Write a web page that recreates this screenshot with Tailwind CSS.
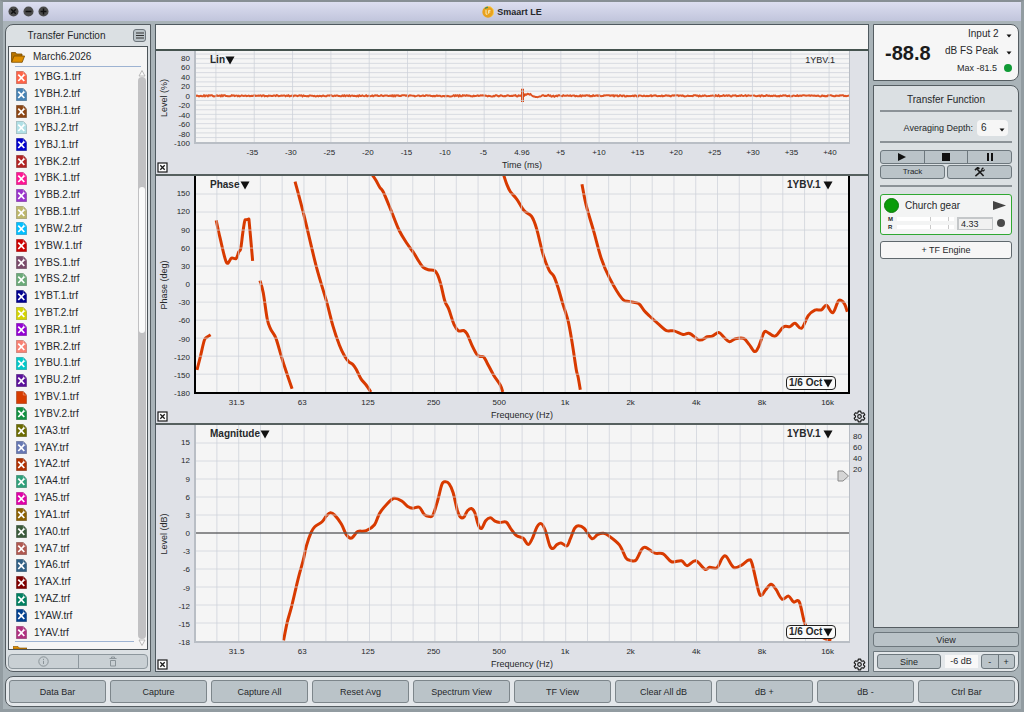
<!DOCTYPE html>
<html lang="en">
<head>
<meta charset="utf-8">
<meta name="viewport" content="width=device-width, initial-scale=1">
<title>Smaart LE</title>
<script src="https://cdn.jsdelivr.net/npm/@tailwindcss/browser@4"></script>
</head>
<body class="h-screen overflow-hidden bg-[#a9b3b8] font-['Liberation_Sans',Arial,sans-serif] text-[10px] leading-3 text-[#26282a]">
<svg class="hidden" aria-hidden="true">
  <symbol id="caret" viewBox="0 0 10 9"><path d="M0.5 0.5h9L5 8.5z" fill="#111"/></symbol>
  <symbol id="small-caret" viewBox="0 0 6 4"><path d="M0.5 0.5h5L3 3.5z" fill="#111"/></symbol>
  <symbol id="close-box" viewBox="0 0 11 11"><rect x="1" y="1" width="9" height="9" fill="#fff" stroke="#1a1a1a" stroke-width="1.2"/><path d="M3.3 3.3l4.4 4.4M7.7 3.3L3.3 7.7" stroke="#1a1a1a" stroke-width="1.3"/></symbol>
  <symbol id="gear" viewBox="0 0 24 24"><path d="M9.8 2h4.4l.6 3 1.9 1.100 2.900-1 2.200 3.800-2.300 2v2.200l2.300 2-2.200 3.800-2.900-1-1.900 1.100-.6 3H9.800l-.6-3-1.900-1.100-2.900 1-2.200-3.800 2.300-2v-2.200l-2.300-2 2.200-3.800 2.900 1L9.200 5z" fill="none" stroke="#1a1a1a" stroke-width="2.200" stroke-linejoin="round"/><circle cx="12" cy="12" r="3.300" fill="none" stroke="#1a1a1a" stroke-width="2.200"/></symbol>
</svg>

<div class="flex h-full flex-col border-t-2 border-r-3 border-b-3 border-l-3 border-t-[#878f95] border-r-[#929ca1] border-b-[#929ca1] border-l-[#929ca1]">
  <header class="relative flex h-[19px] shrink-0 items-center bg-linear-to-b from-[#dcdef0] to-[#c1c5dc] pl-[5px]">
    <div class="flex gap-1">
      <button aria-label="Close" class="size-[11px]"><svg viewBox="0 0 12 12"><circle cx="6" cy="6" r="5.500" fill="#4b4b4b"/><path d="M3.500 3.500l5 5M8.500 3.500l-5 5" stroke="#111" stroke-width="1.600"/></svg></button>
      <button aria-label="Minimize" class="size-[11px]"><svg viewBox="0 0 12 12"><circle cx="6" cy="6" r="5.500" fill="#4b4b4b"/><path d="M2.800 6h6.400" stroke="#111" stroke-width="1.600"/></svg></button>
      <button aria-label="Zoom" class="size-[11px]"><svg viewBox="0 0 12 12"><circle cx="6" cy="6" r="5.500" fill="#4b4b4b"/><path d="M2.800 6h6.400M6 2.800v6.400" stroke="#111" stroke-width="1.600"/></svg></button>
    </div>
    <h1 class="absolute inset-0 flex items-center justify-center gap-[3px] text-[9px] font-bold">
      <svg viewBox="0 0 12 12" class="size-[12px]" aria-hidden="true"><circle cx="6" cy="6" r="5.700" fill="#e9a21c"/><path d="M6 .3A5.700 5.700 0 0 1 11.700 6 5.700 5.700 0 0 1 9 10.800" fill="none" stroke="#f7cf5a" stroke-width="1"/><path d="M3 2.600A4.500 4.500 0 0 1 6 1.400" stroke="#3f8f5a" stroke-width="1.200" fill="none"/><path d="M4 3.800v4.400h1.500M8.500 4.400H6.600v3.300M6.600 6h1.700" fill="none" stroke="#fbe9b8" stroke-width="1"/></svg>
      Smaart LE
    </h1>
  </header>

  <div class="flex min-h-0 flex-1 gap-1 pt-[3px] pr-[2px] pl-[2px]">
    <aside class="flex w-[146px] shrink-0 flex-col rounded-tl-lg rounded-bl-lg border border-[#555d62] bg-[#dbe0e3] px-[2px] pb-[2px]">
      <div class="flex h-[21px] shrink-0 items-center">
        <h2 class="flex-1 pr-2 text-center">Transfer Function</h2>
        <button aria-label="Menu" class="mr-[2px] flex size-[13px] items-center justify-center rounded-[3px] border border-[#6d757b] bg-[#bac3c8]"><svg viewBox="0 0 8 7" class="h-[7px] w-[8px]"><path d="M0 1h8M0 3.500h8M0 6h8" stroke="#333" stroke-width="1"/></svg></button>
      </div>
      <div class="flex min-h-0 flex-1 flex-col overflow-hidden border border-[#4c5459] bg-[#f5f5f5]">
        <button class="mr-2 ml-[2px] flex h-[19px] shrink-0 items-center gap-2 text-left">
          <svg viewBox="0 0 14 12" class="h-[12px] w-[14px]"><path d="M.5 11V1.500h4l1 1.500h5.500v2" fill="#b87400" stroke="#7a4c00" stroke-width=".8"/><path d="M.6 11.300L3 5h10.600l-2.400 6.300z" fill="#e08f00" stroke="#7a4c00" stroke-width=".8"/></svg>
          March6.2026
        </button>
        <div class="mr-[6px] ml-[6px] h-px shrink-0 bg-[#9db3d2]"></div>
        <div class="flex min-h-0 flex-1 gap-1 pr-px">
          <div class="flex min-w-0 flex-1 flex-col pt-[2px]">
            <ul id="files" class="flex min-h-0 flex-1 flex-col"></ul>
            <div class="ml-[6px] h-px shrink-0 bg-[#9db3d2]"></div>
            <div class="mt-1 h-[3px] shrink-0 overflow-hidden pl-1"><svg viewBox="0 0 14 3" class="h-[3px] w-[14px]"><path d="M0 3V.5h5L6.500 2H14v1z" fill="#e08f00" stroke="#7a4c00" stroke-width=".6"/></svg></div>
          </div>
          <div class="flex w-[8px] flex-col items-center pt-[2px] pb-[2px]">
            <svg viewBox="0 0 8 8" class="size-[8px]"><path d="M1 7l3-5.500L7 7z" fill="#fafafa" stroke="#aaa" stroke-width=".8"/></svg>
            <div class="flex w-full flex-1 flex-col rounded-full bg-[#c1c1c3] px-px">
              <div class="basis-[19.5%]"></div>
              <div class="basis-[26%] rounded-full bg-[#fafafa]"></div>
            </div>
            <svg viewBox="0 0 8 8" class="size-[8px]"><path d="M1 1l3 5.500L7 1z" fill="#fafafa" stroke="#aaa" stroke-width=".8"/></svg>
          </div>
        </div>
      </div>
      <div class="mt-1 flex h-[15px] shrink-0 rounded-sm border border-[#8d979d] bg-[#c9d0d4]">
        <button aria-label="Info" class="flex flex-1 items-center justify-center border-r border-[#8d979d]"><svg viewBox="0 0 11 11" class="size-[11px]" fill="none" stroke="#8b9499"><circle cx="5.500" cy="5.500" r="4.700"/><path d="M5.500 4.800v3.200M5.500 2.800v1.200"/></svg></button>
        <button aria-label="Delete" class="flex flex-1 items-center justify-center"><svg viewBox="0 0 8 11" class="h-[11px] w-[8px]" fill="none" stroke="#8b9499"><path d="M.5 2.500h7M2.500 2.500v-1.500h3v1.500M1.500 4.500v5.500h5v-5.500z"/></svg></button>
      </div>
    </aside>

    <main class="flex min-w-0 flex-1 flex-col border border-[#4f5a60] bg-[#dfe1e7]">
      <div class="h-[24px] shrink-0 bg-[#f6f6f6]"></div>

      <section class="grid min-h-0 flex-[123] grid-cols-[38px_1fr_18px] grid-rows-[1fr_16px_14px] border-t-2 border-[#45534f]" aria-label="Impulse response">
        <div class="relative">
          <div class="flex h-full w-4 items-center justify-center"><span class="-rotate-90 text-[9px] whitespace-nowrap">Level (%)</span></div>
          <div id="y-imp"></div>
        </div>
        <div class="relative border-r border-b-2 border-l-2 border-[#b9bec5] bg-[#f5f5f5]">
          <svg id="plot-imp" class="absolute inset-0 h-full w-full" viewBox="0 0 656 93" preserveAspectRatio="none"></svg>
          <div class="relative flex justify-between pt-[3px] pr-[14px] pl-[14px]">
            <label class="flex items-center font-bold"><select aria-label="Scale" class="appearance-none"><option>Lin</option></select><svg class="h-[9px] w-[10px]"><use href="#caret"/></svg></label>
            <span class="text-[9px]">1YBV.1</span>
          </div>
        </div>
        <div></div>
        <div></div><div id="x-imp" class="relative"></div><div></div>
        <div class="flex items-center pl-px"><button aria-label="Close impulse view"><svg class="block size-[11px]"><use href="#close-box"/></svg></button></div>
        <div class="text-center text-[9px] leading-[11px]">Time (ms)</div>
        <div></div>
      </section>

      <section class="grid min-h-0 flex-[247] grid-cols-[38px_1fr_18px] grid-rows-[1fr_16px_13px] border-t-2 border-[#56605f]" aria-label="Phase">
        <div class="relative">
          <div class="flex h-full w-4 items-center justify-center"><span class="-rotate-90 text-[9px] whitespace-nowrap">Phase (deg)</span></div>
          <div id="y-phase"></div>
        </div>
        <div class="relative flex flex-col justify-between border-2 border-t-0 border-black bg-[#f5f5f5] pt-[3px] pr-[12px] pb-[2px] pl-[14px]">
          <svg id="plot-phase" class="absolute inset-0 h-full w-full" viewBox="117 15 1968 657" preserveAspectRatio="none"></svg>
          <div class="relative flex justify-between font-bold">
            <label class="flex items-center"><select aria-label="Plot type" class="appearance-none"><option>Phase</option></select><svg class="h-[9px] w-[10px]"><use href="#caret"/></svg></label>
            <label class="mr-[3px] flex items-center gap-[2px]"><select aria-label="Trace" class="appearance-none"><option>1YBV.1</option></select><svg class="h-[9px] w-[10px]"><use href="#caret"/></svg></label>
          </div>
          <label class="relative flex h-[14px] items-center self-end rounded-sm border border-[#222] bg-[#fafafa] px-[2px] font-bold"><select aria-label="Smoothing" class="appearance-none"><option>1/6 Oct</option></select><svg class="h-[9px] w-[10px]"><use href="#caret"/></svg></label>
        </div>
        <div></div>
        <div></div><div id="x-phase" class="relative"></div><div></div>
        <div class="flex items-center pl-px"><button aria-label="Close phase view"><svg class="block size-[11px]"><use href="#close-box"/></svg></button></div>
        <div class="text-center text-[9px] leading-[11px]">Frequency (Hz)</div>
        <div class="flex items-center justify-center"><button aria-label="Phase settings"><svg class="block size-[13px]"><use href="#gear"/></svg></button></div>
      </section>

      <section class="grid min-h-0 flex-[246] grid-cols-[38px_1fr_18px] grid-rows-[1fr_15px_13px] border-t-2 border-[#56605f]" aria-label="Magnitude">
        <div class="relative">
          <div class="flex h-full w-4 items-center justify-center"><span class="-rotate-90 text-[9px] whitespace-nowrap">Level (dB)</span></div>
          <div id="y-mag"></div>
        </div>
        <div class="relative flex flex-col justify-between border-r border-b-2 border-l-2 border-[#b9bec5] bg-[#f5f5f5] pt-[3px] pr-[13px] pb-[2px] pl-[14px]">
          <svg id="plot-mag" class="absolute inset-0 h-full w-full" viewBox="117 15 1968 654" preserveAspectRatio="none"></svg>
          <div class="relative flex justify-between font-bold">
            <label class="flex items-center"><select aria-label="Plot type" class="appearance-none"><option>Magnitude</option></select><svg class="h-[9px] w-[10px]"><use href="#caret"/></svg></label>
            <label class="mr-[3px] flex items-center gap-[2px]"><select aria-label="Trace" class="appearance-none"><option>1YBV.1</option></select><svg class="h-[9px] w-[10px]"><use href="#caret"/></svg></label>
          </div>
          <label class="relative flex h-[14px] items-center self-end rounded-sm border border-[#222] bg-[#fafafa] px-[2px] font-bold"><select aria-label="Smoothing" class="appearance-none"><option>1/6 Oct</option></select><svg class="h-[9px] w-[10px]"><use href="#caret"/></svg></label>
          <svg class="absolute top-[21%] right-0 h-[12px] w-[12px]" viewBox="0 0 12 12"><path d="M1 1h5l5.500 5L6 11H1z" fill="#d5d5d5" stroke="#8a8a8a"/></svg>
        </div>
        <div class="flex flex-col pt-[6px] pl-[3px] text-[8px] leading-[11px]"><span>80</span><span>60</span><span>40</span><span>20</span></div>
        <div></div><div id="x-mag" class="relative"></div><div></div>
        <div class="flex items-center pl-px"><button aria-label="Close magnitude view"><svg class="block size-[11px]"><use href="#close-box"/></svg></button></div>
        <div class="text-center text-[9px]">Frequency (Hz)</div>
        <div class="flex items-center justify-center"><button aria-label="Magnitude settings"><svg class="block size-[13px]"><use href="#gear"/></svg></button></div>
      </section>
    </main>

    <aside class="flex w-[146px] shrink-0 flex-col gap-1">
      <section class="flex h-[57px] shrink-0 items-center rounded-r-lg border border-[#555d62] bg-[#f6f6f6] pr-[6px] pl-[11px]" aria-label="Input level">
        <div class="text-[20px] leading-6 font-bold text-[#1b1b1b]">-88.8</div>
        <div class="flex flex-1 flex-col items-end gap-[5px] pb-[3px]">
          <label class="flex items-center gap-[7px]"><select aria-label="Input" class="appearance-none"><option>Input 2</option></select><svg class="mt-1 h-[4px] w-[6px]"><use href="#small-caret"/></svg></label>
          <label class="flex items-center gap-[7px]"><select aria-label="Meter scale" class="appearance-none"><option>dB FS Peak</option></select><svg class="mt-1 h-[4px] w-[6px]"><use href="#small-caret"/></svg></label>
          <div class="flex items-center gap-[7px] text-[9px]">Max -81.5<span class="size-[8px] rounded-full bg-[#0f9a35]"></span></div>
        </div>
      </section>

      <section class="flex min-h-0 flex-1 flex-col rounded-tr-lg border border-[#555d62] bg-[#dbe0e3] px-[6px] pt-2" aria-label="Transfer function controls">
        <h2 class="text-center">Transfer Function</h2>
        <hr class="mt-1 border-t-2 border-[#8b9297]">
        <label class="mt-2 mr-1 flex items-center justify-end gap-1 text-[9px]">Averaging Depth:
          <span class="flex h-[16px] w-[31px] items-center justify-between rounded-sm bg-[#f6f6f6] pr-[3px] pl-1 text-[10px]"><select class="appearance-none"><option>6</option></select><svg class="mt-1 h-[4px] w-[6px]"><use href="#small-caret"/></svg></span>
        </label>
        <hr class="mt-[5px] border-t-2 border-[#8b9297]">
        <div class="mt-[7px] flex h-[14px] divide-x divide-[#6d777d] rounded-[3px] border border-[#6d777d] bg-[#bac3c8]">
          <button aria-label="Play" class="flex flex-1 items-center justify-center"><svg viewBox="0 0 8 8" class="size-[8px]"><path d="M0 0l8 4-8 4z" fill="#111"/></svg></button>
          <button aria-label="Stop" class="flex flex-1 items-center justify-center"><span class="size-[8px] bg-[#111]"></span></button>
          <button aria-label="Pause" class="flex flex-1 items-center justify-center gap-[2px]"><span class="h-[8px] w-[2px] bg-[#111]"></span><span class="h-[8px] w-[2px] bg-[#111]"></span></button>
        </div>
        <div class="mt-px flex h-[14px] gap-[2px]">
          <button class="flex-1 rounded-[3px] border border-[#6d777d] bg-[#bac3c8] text-[8px]">Track</button>
          <button aria-label="Tools" class="flex flex-1 items-center justify-center rounded-[3px] border border-[#6d777d] bg-[#bac3c8]"><svg viewBox="0 0 12 11" class="h-[10px] w-[11px]" fill="none" stroke="#1a1a1a"><path d="M1 3.500L4 .8l2 1.200" stroke-width="1.900"/><path d="M3.500 2.500l7 7.500" stroke-width="1.700"/><path d="M1.500 10L8.500 4" stroke-width="1.700"/><path d="M10.300.8L8.500 2.500l.3 1.600 1.600.2 1.200-1.500" stroke-width="1.400"/></svg></button>
        </div>
        <hr class="mt-[6px] border-t-2 border-[#8b9297]">
        <div class="mt-[7px] flex h-[41px] shrink-0 flex-col rounded-[3px] border border-[#2fa832] bg-[#f3f4f4] px-[3px] pt-[3px]">
          <div class="flex items-center">
            <span class="size-[15px] rounded-full border border-[#0b7a0b] bg-[#0a9c0a]"></span>
            <span class="flex-1 pl-[6px]">Church gear</span>
            <button aria-label="Run engine" class="mr-[2px]"><svg viewBox="0 0 13 9" class="h-[9px] w-[13px]"><path d="M0 0l13 4.500L0 9z" fill="#444"/></svg></button>
          </div>
          <div class="mt-[2px] flex items-center pl-[4px]">
            <div class="flex w-[9px] flex-col text-[6px] leading-[8px] font-bold"><span>M</span><span>R</span></div>
            <div class="flex flex-1 flex-col gap-1">
              <div class="grid h-[4px] grid-cols-[34px_18px_1fr] divide-x divide-[#c9c9c9] bg-white"><i></i><i></i><i></i></div>
              <div class="grid h-[4px] grid-cols-[34px_18px_1fr] divide-x divide-[#c9c9c9] bg-white"><i></i><i></i><i></i></div>
            </div>
            <input aria-label="Delay (ms)" value="4.33" class="ml-[3px] h-[13px] w-[36px] border-t-2 border-r border-b border-l-2 border-[#c4c7c9] bg-[#f1f1f1] px-[2px] text-[9px]">
            <button aria-label="Find delay" class="mr-[3px] ml-[4px] size-[8px] rounded-full bg-[#4a4a4a]"></button>
          </div>
        </div>
        <button class="mt-[6px] h-[18px] shrink-0 rounded-[3px] border border-[#5f686d] bg-[#f6f6f6] text-[9px]">+ TF Engine</button>
      </section>

      <button class="h-[15px] shrink-0 rounded-[3px] border border-[#6d777d] bg-[#bac3c8] text-[9px]">View</button>
      <div class="flex h-[21px] shrink-0 items-center rounded-br-lg border border-[#6d777d] bg-[#e3e7ea] px-[3px]">
        <button class="h-[15px] w-[64px] rounded-[3px] border border-[#6d777d] bg-[#bac3c8] text-[9px]">Sine</button>
        <output class="mx-auto h-[13px] w-[33px] bg-[#f8f8f8] text-center text-[9px] leading-[13px]">-6 dB</output>
        <div class="flex h-[15px] w-[34px] divide-x divide-[#6d777d] rounded-[3px] border border-[#6d777d] bg-[#bac3c8] text-[9px]">
          <button aria-label="Decrease level" class="flex-1">-</button><button aria-label="Increase level" class="flex-1">+</button>
        </div>
      </div>
    </aside>
  </div>

  <nav class="mx-[2px] mt-1 mb-[2px] grid h-[31px] shrink-0 grid-cols-10 gap-1 rounded-lg border border-[#555d62] bg-[#e3e7ea] px-[3px] py-[3px] text-[9px]">
    <button class="rounded-[3px] border border-[#7d868b] bg-[#bac3c8]">Data Bar</button>
    <button class="rounded-[3px] border border-[#7d868b] bg-[#bac3c8]">Capture</button>
    <button class="rounded-[3px] border border-[#7d868b] bg-[#bac3c8]">Capture All</button>
    <button class="rounded-[3px] border border-[#7d868b] bg-[#bac3c8]">Reset Avg</button>
    <button class="rounded-[3px] border border-[#7d868b] bg-[#bac3c8]">Spectrum View</button>
    <button class="rounded-[3px] border border-[#7d868b] bg-[#bac3c8]">TF View</button>
    <button class="rounded-[3px] border border-[#7d868b] bg-[#bac3c8]">Clear All dB</button>
    <button class="rounded-[3px] border border-[#7d868b] bg-[#bac3c8]">dB +</button>
    <button class="rounded-[3px] border border-[#7d868b] bg-[#bac3c8]">dB -</button>
    <button class="rounded-[3px] border border-[#7d868b] bg-[#bac3c8]">Ctrl Bar</button>
  </nav>
</div>

<script>
const byId = id => document.getElementById(id);

// Trace files: name and trace colour. The visible trace has no cross on its icon.
const files = [
  ['1YBG.1','#ff6347'],['1YBH.2','#4682b4'],['1YBH.1','#8b4513'],['1YBJ.2','#b0e0e6'],['1YBJ.1','#0000cd'],
  ['1YBK.2','#b22222'],['1YBK.1','#ff1493'],['1YBB.2','#9932cc'],['1YBB.1','#bdb76b'],['1YBW.2','#00bfff'],
  ['1YBW.1','#cc0000'],['1YBS.1','#7a4a6a'],['1YBS.2','#6aaa78'],['1YBT.1','#000090'],['1YBT.2','#d4d400'],
  ['1YBR.1','#9400d3'],['1YBR.2','#fa8072'],['1YBU.1','#00c8c8'],['1YBU.2','#5b109b'],['1YBV.1','#d83c00'],
  ['1YBV.2','#109040'],['1YA3','#6b6b00'],['1YAY','#6678b4'],['1YA2','#b03000'],['1YA4','#2fa07a'],
  ['1YA5','#e000a8'],['1YA1','#8b6000'],['1YA0','#3a5a3a'],['1YA7','#b05850'],['1YA6','#2f5f85'],
  ['1YAX','#800000'],['1YAZ','#008060'],['1YAW','#004090'],['1YAV','#b03080']];
byId('files').innerHTML = files.map(([name, colour]) => `
  <li class="flex min-h-0 flex-1 items-center"><button class="flex items-center gap-[7px] pl-[7px]">
    <svg viewBox="0 0 11 13" class="h-[13px] w-[11px]"><path d="M.3.3h7l3.400 3.700v8.700H.3z" fill="${colour}" stroke="#000" stroke-opacity=".3" stroke-width=".6"/><path d="M7.300.3V4h3.400" fill="none" stroke="#fff" stroke-opacity=".55" stroke-width=".6"/>${name === '1YBV.1' ? '' : '<path d="M2.300 3.600l6 6.400M8.300 3.600l-6 6.400" stroke="#fff" stroke-width="1.700"/>'}</svg>${name}.trf</button></li>`).join('');

// Axis labels, placed by their share of the axis length.
function yAxis(id, values, share) {
  byId(id).innerHTML = values.map(v => `<span class="absolute right-[4px] -translate-y-1/2 text-[8px] leading-[8px]" style="top:${share(v)}%">${v}</span>`).join('');
}
function xAxis(id, labels) {
  byId(id).innerHTML = labels.map(([text, share]) => `<span class="absolute top-[4px] -translate-x-1/2 text-[8px] leading-[9px]" style="left:${share}%">${text}</span>`).join('');
}
yAxis('y-imp', [80,60,40,20,0,-20,-40,-60,-80,-100], v => 49.2 - v * 0.51);
yAxis('y-phase', [150,120,90,60,30,0,-30,-60,-90,-120,-150,-180], v => (180 - v) / 3.6);
yAxis('y-mag', [15,12,9,6,3,0,-3,-6,-9,-12,-15,-18], v => (18 - v) / 0.36);
xAxis('x-imp', ['-35','-30','-25','-20','-15','-10','-5','4.96','+5','+10','+15','+20','+25','+30','+35','+40'].map((t, i) => [t, 8.9 + i * 5.87]));
const octaves = ['31.5','63','125','250','500','1k','2k','4k','8k','16k'].map((t, i) => [t, 6.5 + i * 10.01]);
xAxis('x-phase', octaves);
xAxis('x-mag', octaves);

const line = (x1, y1, x2, y2, colour) => `<line x1="${x1}" y1="${y1}" x2="${x2}" y2="${y2}" stroke="${colour}" stroke-width="1" vector-effect="non-scaling-stroke"/>`;

// Smooth path through flat [x, y, x, y, ...] data.
function curve(data) {
  const p = [];
  for (let i = 0; i < data.length; i += 2) p.push([data[i], data[i + 1]]);
  let d = `M${p[0]}`;
  for (let i = 0; i < p.length - 1; i++) {
    const a = p[i - 1] || p[i], b = p[i], c = p[i + 1], e = p[i + 2] || c;
    d += `C${b[0] + (c[0] - a[0]) / 6} ${b[1] + (c[1] - a[1]) / 6} ${c[0] - (e[0] - b[0]) / 6} ${c[1] - (e[1] - b[1]) / 6} ${c}`;
  }
  return `<path d="${d}" fill="none" stroke="#d83a00" stroke-width="3" vector-effect="non-scaling-stroke"/>`;
}
function grid(height, step) {
  let out = '';
  for (let i = 0; i < 29; i++) out += line(180 + i * 65.7, 15, 180 + i * 65.7, 15 + height, 'rgba(205,210,217,.75)');
  for (let i = 1; i < 12; i++) out += line(117, 15 + i * step, 2085, 15 + i * step, 'rgba(205,210,217,.75)');
  return out;
}

const phase = [
  [120,605,130,565,142,515,150,505,161,498],
  [178,150,190,205,209,278,224,265,238,266,246,246,252,236,258,190,264,152,269,148,276,147,278,160,288,273],
  [310,333,320,370,332,450,342,480,358,508,375,565,390,612,407,662],
  [416,32,443,135,480,290,512,400,530,470,550,530,565,562,578,580,590,588,600,602,615,632,630,650,645,672],
  [650,13,660,28,672,50,682,63,705,118,730,180,755,222,775,250,790,275,803,293,818,300,836,302,846,315,856,345,868,395,880,420,896,467,910,486,925,485,935,495,950,530,965,558,975,564,985,565,995,582,1015,620,1035,650,1043,672],
  [1046,13,1055,40,1066,63,1085,85,1107,120,1130,138,1145,175,1165,255,1183,302,1197,320,1210,355,1223,400,1240,455,1252,520,1265,605,1270,625,1277,665],
  [1282,40,1295,105,1318,185,1340,265,1365,325,1403,388,1427,397,1453,403,1470,425,1485,440,1515,467,1537,485,1560,486,1587,497,1607,494,1637,514,1660,504,1675,502,1695,491,1710,505,1727,519,1745,510,1770,509,1787,528,1803,549,1815,535,1831,492,1840,489,1865,502,1890,474,1910,473,1925,463,1945,478,1965,440,1985,423,2005,422,2020,408,2039,431,2055,396,2065,394,2075,405,2083,428]];
byId('plot-phase').innerHTML = phase.map(curve).join('') + grid(657, 54.8);

const magnitude = [
  [381,667,392,612,405,565,425,480,440,425,450,380,464,340,475,323,497,308,510,290,522,281,535,288,555,315,570,347,584,358,595,348,605,337,630,335,655,317,670,283,690,257,714,237,738,246,755,262,770,267,790,264,805,286,820,292,831,288,845,245,858,195,868,187,880,193,892,220,905,275,915,295,925,293,935,275,947,268,957,280,968,318,978,328,990,305,1004,296,1018,306,1033,310,1052,309,1065,328,1083,350,1103,358,1118,377,1130,360,1145,323,1158,314,1170,335,1183,380,1193,389,1205,377,1217,372,1235,381,1245,360,1258,328,1270,320,1287,328,1310,359,1327,347,1345,343,1360,350,1393,378,1413,418,1427,425,1443,424,1460,392,1473,386,1500,403,1525,405,1550,429,1580,426,1597,441,1623,426,1651,452,1665,446,1687,447,1703,418,1715,413,1737,446,1760,440,1783,424,1793,435,1813,520,1822,530,1833,515,1850,497,1865,513,1883,542,1903,533,1918,551,1935,550,1950,610,1962,640],
  [1998,640,2005,655,2012,662,2032,666]];
byId('plot-mag').innerHTML = magnitude.map(curve).join('') + grid(654, 54.5) + line(117, 342, 2085, 342, '#333');

// Impulse response: fine noise, with the arrival at 4.96 ms followed by a short decay.
let impulse = 'M0 45.8', seed = 7;
for (let x = 0; x <= 656; x += 1) {
  seed = (seed * 1103515245 + 12345) % 2147483648;
  const noise = (seed / 2147483648 - .5) * 1.3;
  const decay = x > 330 ? Math.sin((x - 330) / 2.8) * 2.6 * Math.exp(-(x - 330) / 14) : 0;
  impulse += `L${x} ${(45.8 - decay + noise).toFixed(1)}`;
}
let impGrid = '';
for (let i = 0; i < 17; i++) impGrid += line(20 + i * 38.5, 0, 20 + i * 38.5, 93, 'rgba(205,210,217,.75)');
for (let i = -9; i < 10; i++) if (i) impGrid += line(0, 45.8 + i * 4.74, 656, 45.8 + i * 4.74, 'rgba(205,210,217,.75)');
byId('plot-imp').innerHTML = `<path d="${impulse}" fill="none" stroke="#de5322" stroke-width="2" vector-effect="non-scaling-stroke"/><path d="M328 38.500V52M326.500 45h4" stroke="#dc4a14" stroke-width="3" vector-effect="non-scaling-stroke"/>` + impGrid;
</script>
</body>
</html>
